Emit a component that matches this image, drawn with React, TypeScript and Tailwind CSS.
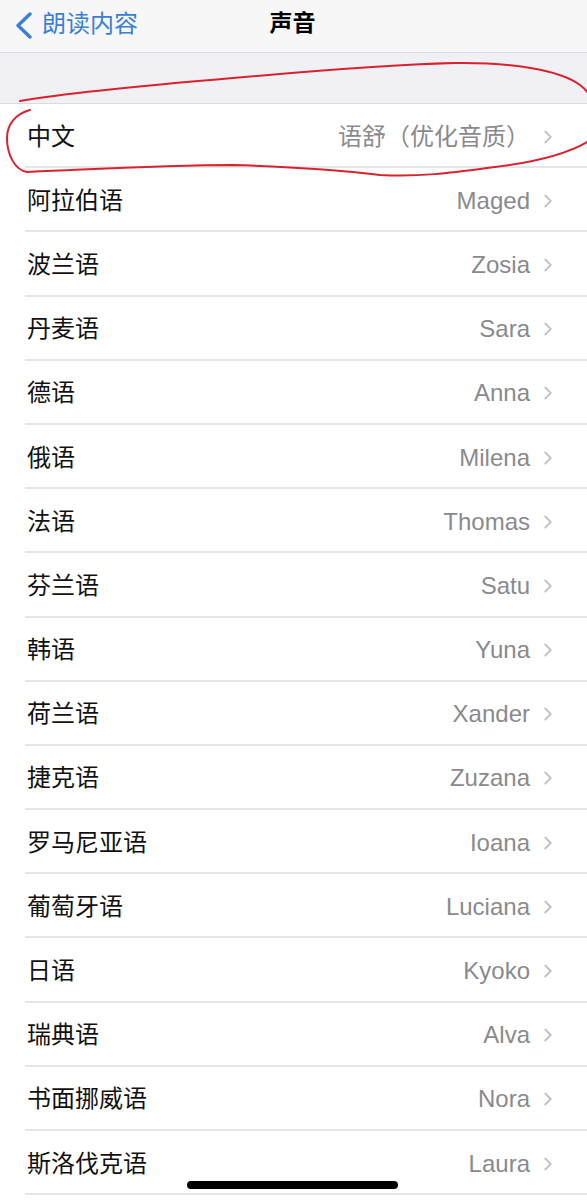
import { ChevronRight } from 'lucide-react';

const VOICES: [string, string][] = [
  ['中文', '语舒（优化音质）'],
  ['阿拉伯语', 'Maged'],
  ['波兰语', 'Zosia'],
  ['丹麦语', 'Sara'],
  ['德语', 'Anna'],
  ['俄语', 'Milena'],
  ['法语', 'Thomas'],
  ['芬兰语', 'Satu'],
  ['韩语', 'Yuna'],
  ['荷兰语', 'Xander'],
  ['捷克语', 'Zuzana'],
  ['罗马尼亚语', 'Ioana'],
  ['葡萄牙语', 'Luciana'],
  ['日语', 'Kyoko'],
  ['瑞典语', 'Alva'],
  ['书面挪威语', 'Nora'],
  ['斯洛伐克语', 'Laura'],
];

const FONT = { fontFamily: '"Liberation Sans", "Noto Sans CJK SC", sans-serif' };

export default function App() {
  return (
    <div className="relative w-[587px] h-[1200px] overflow-hidden bg-white" style={FONT}>
      {/* Nav bar */}
      <div className="relative h-[53px] bg-[#f7f7f8] border-b border-[#d9d9dc] flex items-center">
        <div className="flex items-center pl-[14px] text-[#3a7fd8]">
          <svg width="20" height="28" viewBox="0 0 20 28" className="mb-[3px]">
            <polyline points="16,3 4,14.5 16,26" fill="none" stroke="currentColor" strokeWidth="3.4" strokeLinecap="round" strokeLinejoin="round" />
          </svg>
          <span className="text-[24px] leading-none ml-[8px] mb-[4px]">朗读内容</span>
        </div>
        <div className="absolute left-0 right-0 top-0 h-[52px] flex items-center justify-center pointer-events-none">
          <span className="text-[23px] leading-none font-semibold text-black mb-[6px] mr-[2px]">声音</span>
        </div>
      </div>

      {/* Section gap */}
      <div className="h-[51px] bg-[#f0f0f5] border-b border-[#dcdce0]" />

      {/* Voice list */}
      <div>
        {VOICES.map(([lang, voice]) => (
          <div key={lang} className="h-[64.2px] pl-[25px]">
            <div className="h-full flex items-center border-b-2 border-[#e6e6e8] pl-[2px] pr-[28px] pt-[3px]">
              <span className="text-[24px] leading-none text-[#111]">{lang}</span>
              <span className="ml-auto text-[24px] leading-none text-[#8a8a8e]">{voice}</span>
              <ChevronRight className="w-[22px] h-[24px] ml-[7px] text-[#c2c2c6]" strokeWidth={2} />
            </div>
          </div>
        ))}
      </div>

      {/* Hand-drawn red circle */}
      <svg className="absolute left-0 top-0 pointer-events-none" width="587" height="200" viewBox="0 0 587 200">
        <path
          d="M20 101 C 60 94, 150 85, 233 78 C 300 72, 380 65, 454 63 C 510 62, 560 70, 580 85 C 600 100, 600 130, 587 142 C 570 152, 540 162, 487 168 C 450 173, 420 177, 380 175 C 340 170, 300 167, 233 165 C 160 165, 80 170, 27 172 C 15 170, 7 155, 7 138 C 7 125, 15 114, 30 110"
          fill="none"
          stroke="#d8232e"
          strokeWidth="2"
          strokeLinecap="round"
        />
      </svg>

      {/* Home indicator */}
      <div className="absolute left-[187px] top-[1181px] w-[211px] h-[8px] rounded-full bg-black" />
    </div>
  );
}
